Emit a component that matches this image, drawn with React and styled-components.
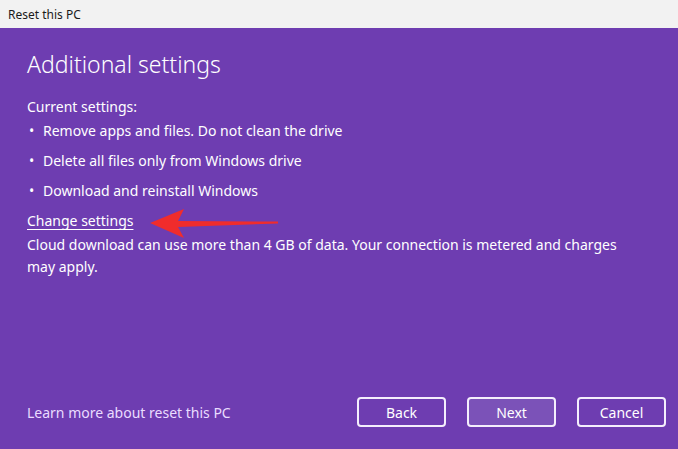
import styled, { createGlobalStyle } from "styled-components";

const GlobalStyle = createGlobalStyle`
  html, body {
    margin: 0;
    padding: 0;
    height: 100%;
  }
  body {
    font-family: "Noto Sans", "Open Sans", sans-serif;
    background: #6e3db1;
  }
`;

const Window = styled.div`
  width: 678px;
  height: 449px;
  display: flex;
  flex-direction: column;
  background: #6e3db1;
  color: #ffffff;
  overflow: hidden;
`;

const TitleBar = styled.div`
  height: 28px;
  flex: none;
  background: #f2f2f2;
  color: #1a1a1a;
  font-size: 12px;
  display: flex;
  align-items: center;
  padding-left: 8px;
`;

const Body = styled.div`
  position: relative;
  flex: 1;
  display: flex;
  flex-direction: column;
  padding: 20px 12px 22px 27px;
`;

const Heading = styled.h1`
  margin: 0;
  font-size: 23px;
  font-weight: 300;
  line-height: 32px;
`;

const Label = styled.div`
  margin-top: 16px;
  font-size: 14px;
  line-height: 22px;
`;

const List = styled.ul`
  list-style: none;
  margin: 2px 0 0;
  padding: 0;
  display: flex;
  flex-direction: column;
  gap: 8px;
`;

const Item = styled.li`
  display: flex;
  align-items: center;
  font-size: 14px;
  line-height: 22px;
  height: 22px;

  &:before {
    content: "•";
    width: 14px;
    padding-left: 2px;
  }
`;

const Link = styled.a`
  margin-top: 8px;
  align-self: flex-start;
  color: #ffffff;
  font-size: 14px;
  line-height: 22px;
  text-decoration: underline;
  text-underline-offset: 3px;
`;

const Note = styled.p`
  margin: 2px 0 0;
  font-size: 14px;
  line-height: 22px;
  max-width: 600px;
`;

const Footer = styled.div`
  margin-top: auto;
  display: flex;
  align-items: center;
`;

const Learn = styled.a`
  flex: 1;
  color: #eadcff;
  font-size: 14px;
  text-decoration: none;
`;

const Buttons = styled.div`
  display: flex;
  gap: 21px;
`;

const Button = styled.button`
  width: 89px;
  height: 30px;
  border: 2px solid #f4eefc;
  border-radius: 4px;
  background: ${({ $primary }) => ($primary ? "#7b52b8" : "transparent")};
  color: #ffffff;
  font-family: inherit;
  font-size: 14px;
  padding: 0;
`;

const Arrow = styled.svg`
  position: absolute;
  left: 148px;
  top: 181px;
`;

export default function App() {
  return (
    <>
      <GlobalStyle />
      <Window>
        <TitleBar>Reset this PC</TitleBar>
        <Body>
          <Heading>Additional settings</Heading>
          <Label>Current settings:</Label>
          <List>
            <Item>Remove apps and files. Do not clean the drive</Item>
            <Item>Delete all files only from Windows drive</Item>
            <Item>Download and reinstall Windows</Item>
          </List>
          <Link href="#">Change settings</Link>
          <Note>
            Cloud download can use more than 4 GB of data. Your connection is
            metered and charges may apply.
          </Note>
          <Footer>
            <Learn href="#">Learn more about reset this PC</Learn>
            <Buttons>
              <Button>Back</Button>
              <Button $primary>Next</Button>
              <Button>Cancel</Button>
            </Buttons>
          </Footer>
          <Arrow width="132" height="32" viewBox="0 0 132 32">
            <path
              d="M2 14 L36 0 L30 12 L130 12.5 L130 14.5 L30 18 L36 29 Z"
              fill="#f02c2c"
            />
          </Arrow>
        </Body>
      </Window>
    </>
  );
}
